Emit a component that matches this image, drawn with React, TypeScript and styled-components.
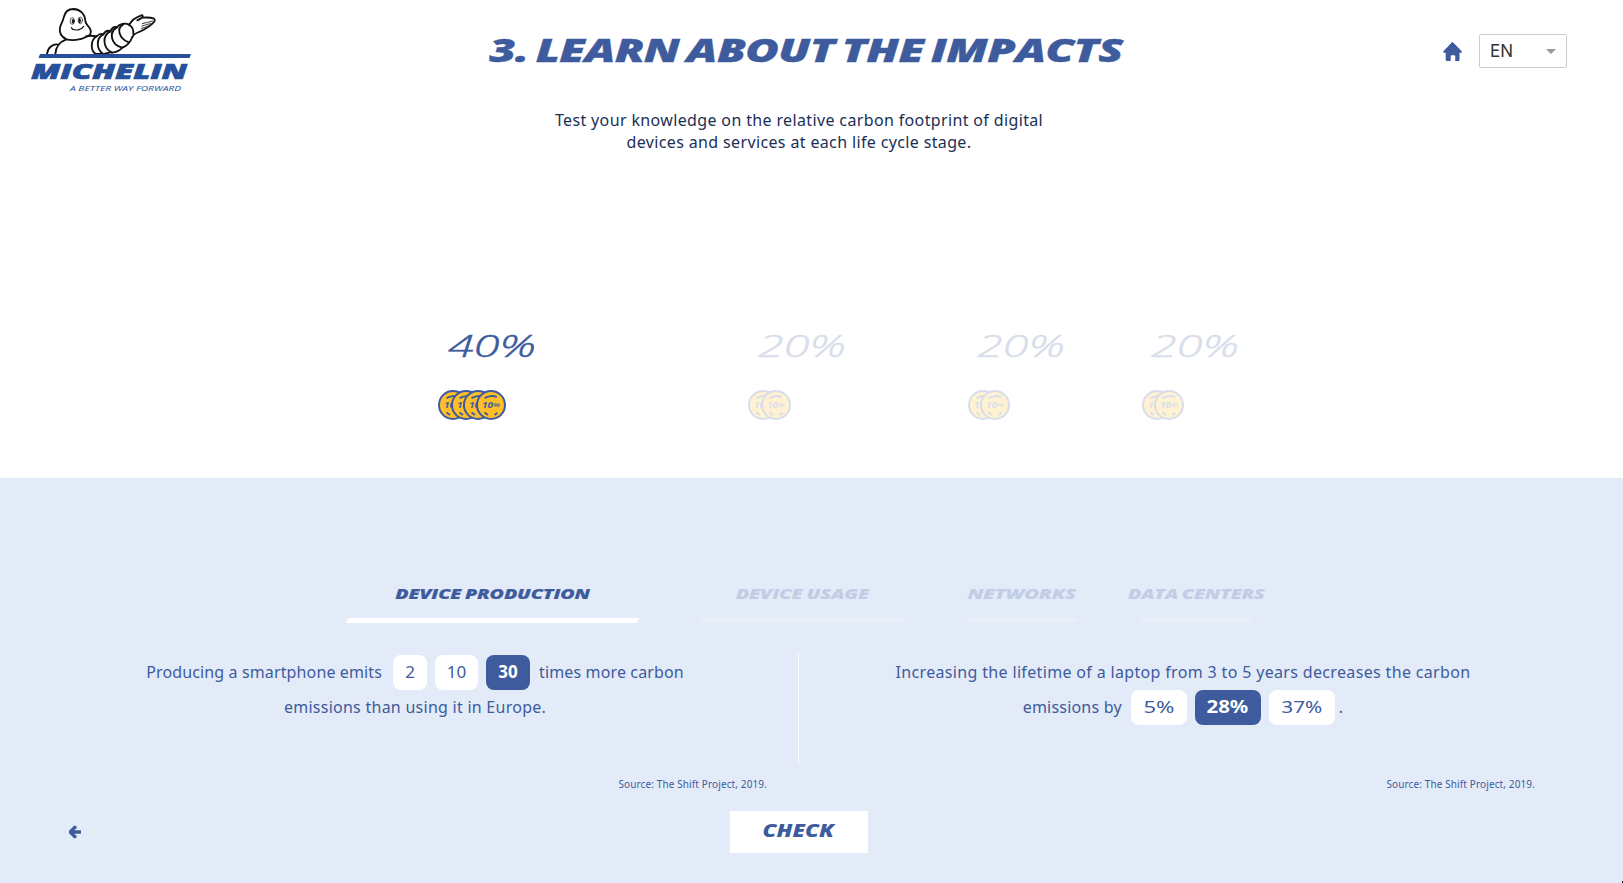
import React from "react";
import styled, { createGlobalStyle } from "styled-components";
import { FaArrowLeft } from "react-icons/fa";

const BLUE = "#3d5b9d";
const PALE = "#e4ebf8";

const GlobalStyle = createGlobalStyle`
  * { box-sizing: border-box; }
  body { margin: 0; background: #fff; overflow: hidden; }
`;

const Page = styled.div`
  height: 883px;
  display: flex;
  flex-direction: column;
  color: ${BLUE};
  font-family: "Noto Sans", sans-serif;
  font-size: 16px;
`;

const Top = styled.section`
  height: 478px;
  display: flex;
  flex-direction: column;
`;

const Header = styled.header`
  height: 100px;
  width: 1567px;
  padding: 0 0 0 31px;
  display: grid;
  grid-template-columns: 160px 1fr 160px;
  align-items: center;
`;

const Display = styled.span<{ $stretch: number }>`
  display: inline-block;
  font-family: "Open Sans", sans-serif;
  font-style: italic;
  font-weight: 800;
  white-space: nowrap;
  transform: scaleX(${(p) => p.$stretch});
`;

const Title = styled.h1`
  margin: 0;
  padding: 0 0 1px 14px;
  text-align: center;
  font-size: 32px;
  line-height: 44px;
  word-spacing: -2.8px;
  letter-spacing: -0.4px;
  -webkit-text-stroke: 0.4px ${BLUE};
`;

const Tools = styled.div`
  display: flex;
  justify-content: flex-end;
  align-items: center;
  gap: 17px;
  padding-top: 2px;
`;

const LanguageSelect = styled.div`
  width: 88px;
  height: 34px;
  padding: 0 10px 1px 10px;
  display: flex;
  align-items: center;
  justify-content: space-between;
  border: 1px solid #ccc;
  border-radius: 2px;
  color: #333;
  font: 17px/32px "Inter", sans-serif;
`;

const Caret = styled.span`
  margin-top: 1px;
  border: 5px solid transparent;
  border-top-color: #999;
  border-bottom-width: 0;
`;

const Intro = styled.p`
  width: 1536px;
  margin: 9px 0 0 31px;
  text-align: center;
  color: #1b2f55;
  line-height: 22px;
  letter-spacing: 0.36px;
`;

const Columns = styled.div`
  width: 1536px;
  margin-left: 31px;
  display: flex;
  justify-content: center;
  gap: 61px;
`;

const Shares = styled(Columns)`
  margin-top: 170px;
`;

const Share = styled.div<{ $width: number; $active?: boolean }>`
  width: ${(p) => p.$width}px;
  display: flex;
  flex-direction: column;
  align-items: center;
  opacity: ${(p) => (p.$active ? 1 : 0.2)};
`;

const ShareValue = styled(Display)`
  padding-right: 1px;
  font-weight: 300;
  font-size: 31px;
  line-height: 44px;
  -webkit-text-stroke: 0.5px ${BLUE};
`;

const Coins = styled.div`
  width: 109px;
  margin-top: 23px;
  display: flex;
`;

const CoinIcon = styled.svg`
  width: 30px;
  height: 30px;
  flex: none;
  &:not(:first-child) { margin-left: -17.5px; }
`;

const Quiz = styled.section`
  flex: 1;
  background: ${PALE};
  padding-top: 104px;
`;

const Tab = styled.div<{ $width: number; $active?: boolean }>`
  width: ${(p) => p.$width}px;
  display: flex;
  flex-direction: column;
  align-items: center;
  font-size: 14.4px;
  line-height: 24px;
  word-spacing: -0.8px;
  letter-spacing: -0.1px;
  -webkit-text-stroke: 0.2px ${BLUE};
  opacity: ${(p) => (p.$active ? 1 : 0.2)};
`;

const TabBar = styled.div<{ $active?: boolean }>`
  align-self: stretch;
  height: 5px;
  margin: 12px 1.5px 0;
  background: #fff;
  transform: skewX(-31deg);
  opacity: ${(p) => (p.$active ? 1 : 0.9)};
`;

const Questions = styled.div`
  width: 1536px;
  margin: 31px 0 0 31px;
  display: grid;
  grid-template-columns: 1fr 1fr;
`;

const Question = styled.div`
  height: 140px;
  padding: 1px 32px 3px;
  display: flex;
  flex-direction: column;
`;

const Line = styled.div<{ $tracking?: number }>`
  height: 35px;
  display: flex;
  justify-content: center;
  align-items: center;
  white-space: pre;
  line-height: 24px;
  letter-spacing: ${(p) => p.$tracking ?? 0.2}px;
`;

const Phrase = styled.span`
  padding-bottom: 2px;
`;

const Options = styled.span`
  display: flex;
  gap: 8px;
  margin: 0 9px;
`;

const Option = styled.button<{ $width: number; $selected?: boolean }>`
  width: ${(p) => p.$width}px;
  height: 35px;
  padding: 0 0 2px;
  display: flex;
  justify-content: center;
  align-items: center;
  border: 0;
  border-radius: 8px;
  background: ${(p) => (p.$selected ? BLUE : "#fff")};
  color: ${(p) => (p.$selected ? "#fff" : BLUE)};
  font: ${(p) => (p.$selected ? 700 : 400)} 17px "Noto Sans", sans-serif;
`;

const OptionLabel = styled.span<{ $stretch: number }>`
  transform: scaleX(${(p) => p.$stretch});
`;

const Stop = styled(Phrase)`
  margin-left: -5px;
`;

const Source = styled.div`
  margin-top: auto;
  text-align: right;
  font-size: 10px;
  line-height: 14px;
  letter-spacing: 0.12px;
`;

const Divided = styled(Question)`
  background: linear-gradient(#fff, #fff) right top / 1px 110px no-repeat;

  ${Options} {
    margin: 0 9px 0 11px;
  }
`;

const Footer = styled.footer`
  width: 1536px;
  margin: 17px 0 0 31px;
  padding-left: 37px;
  display: grid;
  grid-template-columns: 662px 138px;
  align-items: center;
`;

const BackIcon = styled(FaArrowLeft)`
  color: ${BLUE};
  stroke: ${BLUE};
  stroke-width: 48px;
  width: 12px;
  height: 14px;
  margin-left: 1px;
`;

const CheckButton = styled.button`
  height: 42px;
  border: 0;
  padding: 0 2px 3px 0;
  background: #fff;
  color: ${BLUE};
  font-size: 17px;
`;

const Corner = styled.i`
  position: absolute;
  right: 0;
  bottom: 0;
  width: 1px;
  height: 2px;
  background: #111;
`;

const Logo = () => (
  <svg width="160" height="100" viewBox="0 0 160 100" aria-label="Michelin">
    <g transform="translate(9 5) scale(0.3333)" fill="none" stroke="#111" strokeWidth="5.500" strokeLinejoin="round" strokeLinecap="round">
      <path d="M21 147C23 128 38 115 57 119M46 147C47 128 58 111 79 103" />
      <path d="M79 103C95 107 121 106 138 96C151 92 157 82 150 71C146 63 138 60 136 48C135 26 120 13 101 12C84 12 74 22 71 38C69 49 62 58 60 68C57 82 64 95 79 103Z" />
      <path d="M138 94C150 91 160 92 170 94C177 87 183 85 190 88C196 78 203 75 211 79C216 68 223 64 231 67C239 56 254 53 268 59" />
      <path d="M170 94C151 105 151 136 167 147H188C203 146 211 140 216 143C230 142 240 136 247 128C261 123 271 112 277 96" />
      <path d="M190 88C166 101 170 133 189 147M211 79C184 93 190 131 216 143M231 67C204 82 214 121 247 128M250 58C229 69 236 100 266 112" />
      <path d="M268 59C273 48 287 37 304 31C309 30 309 34 307 38C320 37 333 37 342 41C347 45 344 51 337 56C323 69 306 78 290 84C284 86 280 90 277 96M267 60C278 65 281 76 280 88M307 38L292 46" />
      <path d="M307 56C318 54 328 50 338 48M306 63C317 60 325 57 331 56M304 70C312 68 319 66 324 63" strokeWidth="2.500" />
      <path d="M96 71C108 78 123 76 131 64M94 68l4 5" strokeWidth="3.500" />
      <ellipse cx="97" cy="48" rx="6.500" ry="10" strokeWidth="2" />
      <ellipse cx="121" cy="46" rx="6.500" ry="10" strokeWidth="2" />
      <ellipse cx="99" cy="49" rx="3" ry="7" fill="#111" strokeWidth="1" />
      <ellipse cx="119" cy="47" rx="3" ry="7" fill="#111" strokeWidth="1" />
    </g>
    <path d="M9 54H160L158.500 58H7.500Z" fill="#27509b" />
    <text x="0" y="78.500" fill="#27509b" stroke="#27509b" strokeWidth="0.700" fontFamily="Open Sans" fontStyle="italic" fontWeight="800" fontSize="21.500" textLength="156" lengthAdjust="spacingAndGlyphs">MICHELIN</text>
    <text x="39" y="91" fill="#27509b" fontFamily="Open Sans" fontStyle="italic" fontWeight="500" fontSize="7.200" textLength="111" lengthAdjust="spacingAndGlyphs">A BETTER WAY FORWARD</text>
  </svg>
);

const HomeIcon = () => (
  <svg width="19" height="19" viewBox="0 0 19 19" fill={BLUE}>
    <path d="M8.800.4Q9.500-.3 10.200.4L18.700 9.300Q19.300 10.700 18 10.800H16.500V17.800Q16.500 19 15.400 19H12.200V14.200Q12.200 13.300 11.300 13.300H8.600Q7.700 13.300 7.700 14.200V19H3.900Q2.700 19 2.700 17.800V10.800H1Q-.3 10.700.3 9.300Z" />
  </svg>
);

const Coin = () => (
  <CoinIcon viewBox="0 0 30 30">
    <circle cx="15" cy="15" r="14" fill="#ffbf2b" stroke={BLUE} strokeWidth="2" />
    <path d="M8.500 8.200C12 5.600 17.500 5.400 21 7M8.500 22.500L12 25M18.500 25L21.500 22.700" fill="none" stroke={BLUE} strokeWidth="1.800" />
    <text x="6" y="17.900" fill={BLUE} fontFamily="Open Sans" fontStyle="italic" fontWeight="700" fontSize="8" textLength="11" lengthAdjust="spacingAndGlyphs">10</text>
    <text x="17" y="17.300" fill={BLUE} fontFamily="Open Sans" fontStyle="italic" fontWeight="600" fontSize="5.500" textLength="7" lengthAdjust="spacingAndGlyphs">%</text>
  </CoinIcon>
);

const stages = [
  { name: "DEVICE PRODUCTION", width: 294, share: 40, active: true, stretch: 1.358 },
  { name: "DEVICE USAGE", width: 204, share: 20, stretch: 1.38 },
  { name: "NETWORKS", width: 113, share: 20, stretch: 1.4 },
  { name: "DATA CENTERS", width: 113, share: 20, stretch: 1.355 },
];

export default function App() {
  return (
    <Page>
      <GlobalStyle />
      <Top>
        <Header>
          <Logo />
          <Title><Display $stretch={1.427}>3. LEARN ABOUT THE IMPACTS</Display></Title>
          <Tools>
            <HomeIcon />
            <LanguageSelect>EN<Caret /></LanguageSelect>
          </Tools>
        </Header>
        <Intro>
          Test your knowledge on the relative carbon footprint of digital<br />
          devices and services at each life cycle stage.
        </Intro>
        <Shares>
          {stages.map((s) => (
            <Share key={s.name} $width={s.width} $active={s.active}>
              <ShareValue $stretch={1.51}>{s.share}%</ShareValue>
              <Coins>{Array.from({ length: s.share / 10 }, (_, i) => <Coin key={i} />)}</Coins>
            </Share>
          ))}
        </Shares>
      </Top>
      <Quiz>
        <Columns>
          {stages.map((s) => (
            <Tab key={s.name} $width={s.width} $active={s.active}>
              <Display $stretch={s.stretch}>{s.name}</Display>
              <TabBar $active={s.active} />
            </Tab>
          ))}
        </Columns>
        <Questions>
          <Divided>
            <Line $tracking={0.13}>
              <Phrase>Producing a smartphone emits</Phrase>
              <Options>
                <Option $width={34}>2</Option>
                <Option $width={43}>10</Option>
                <Option $width={44} $selected>30</Option>
              </Options>
              <Phrase>times more carbon</Phrase>
            </Line>
            <Line $tracking={0.26}><Phrase>emissions than using it in Europe.</Phrase></Line>
            <Source>Source: The Shift Project, 2019.</Source>
          </Divided>
          <Question>
            <Line $tracking={0.34}><Phrase>Increasing the lifetime of a laptop from 3 to 5 years decreases the carbon</Phrase></Line>
            <Line>
              <Phrase>emissions by</Phrase>
              <Options>
                <Option $width={56}><OptionLabel $stretch={1.3}>5%</OptionLabel></Option>
                <Option $width={66} $selected><OptionLabel $stretch={1.2}>28%</OptionLabel></Option>
                <Option $width={66}><OptionLabel $stretch={1.22}>37%</OptionLabel></Option>
              </Options>
              <Stop>.</Stop>
            </Line>
            <Source>Source: The Shift Project, 2019.</Source>
          </Question>
        </Questions>
        <Footer>
          <BackIcon />
          <CheckButton><Display $stretch={1.31}>CHECK</Display></CheckButton>
        </Footer>
      </Quiz>
      <Corner />
    </Page>
  );
}
